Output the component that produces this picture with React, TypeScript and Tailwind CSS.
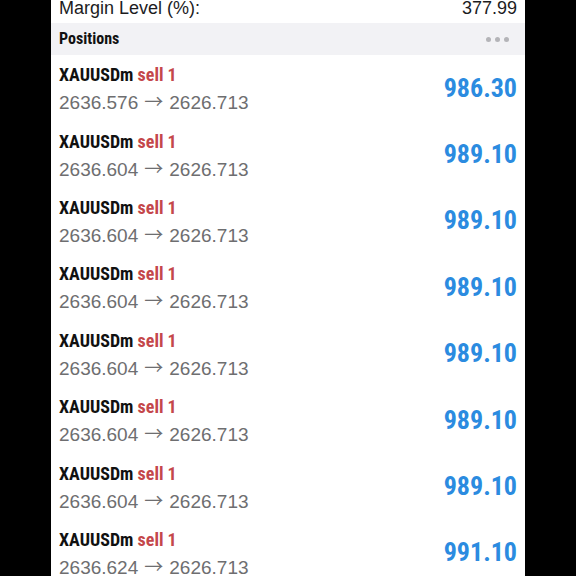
const positions = [
  { open: "2636.576", profit: "986.30" },
  { open: "2636.604", profit: "989.10" },
  { open: "2636.604", profit: "989.10" },
  { open: "2636.604", profit: "989.10" },
  { open: "2636.604", profit: "989.10" },
  { open: "2636.604", profit: "989.10" },
  { open: "2636.604", profit: "989.10" },
  { open: "2636.624", profit: "991.10" },
];

const narrow = "font-['Roboto_Condensed','DejaVu_Sans_Condensed',sans-serif]";
const regular = "font-['Liberation_Sans',Arial,sans-serif]";

export default function App() {
  return (
    <div className="w-[576px] h-[576px] bg-black flex justify-center overflow-hidden">
      <div className="w-[474px] h-full bg-white flex flex-col">
        {/* Margin level row, cut off at top */}
        <div className={`h-[23px] shrink-0 overflow-hidden flex justify-between px-2 text-[18px] leading-[20px] text-[#1c1c1e] ${regular}`}>
          <span className="-mt-[2px]">Margin Level (%):</span>
          <span className="-mt-[2px]">377.99</span>
        </div>

        {/* Section header */}
        <div className="h-[32px] shrink-0 bg-[#f2f2f5] flex items-center justify-between px-2">
          <span className={`text-[16px] font-bold text-[#111] ${narrow}`}>Positions</span>
          <span className="flex gap-[4px] pr-[8px]">
            <span className="w-[5px] h-[5px] rounded-full bg-[#b4b4b8]" />
            <span className="w-[5px] h-[5px] rounded-full bg-[#b4b4b8]" />
            <span className="w-[5px] h-[5px] rounded-full bg-[#b4b4b8]" />
          </span>
        </div>

        {/* Positions list */}
        {positions.map((p, i) => (
          <div key={i} className="h-[66.4px] shrink-0 flex items-center justify-between px-2">
            <div className="flex flex-col pt-[2px]">
              <div className={`leading-[26px] text-[18px] font-bold ${narrow}`}>
                <span className="text-[#111]">XAUUSDm</span>{" "}
                <span className="text-[#c4474b]">sell 1</span>
              </div>
              <div className={`leading-[26px] text-[19px] text-[#6e6e70] ${regular}`}>
                {p.open}
                <span className="mx-[6px] font-['Noto_Sans_CJK_JP',sans-serif] text-[19px]">→</span>
                2626.713
              </div>
            </div>
            <div className={`text-[26px] font-bold text-[#2b8be0] ${narrow}`}>{p.profit}</div>
          </div>
        ))}
      </div>
    </div>
  );
}
